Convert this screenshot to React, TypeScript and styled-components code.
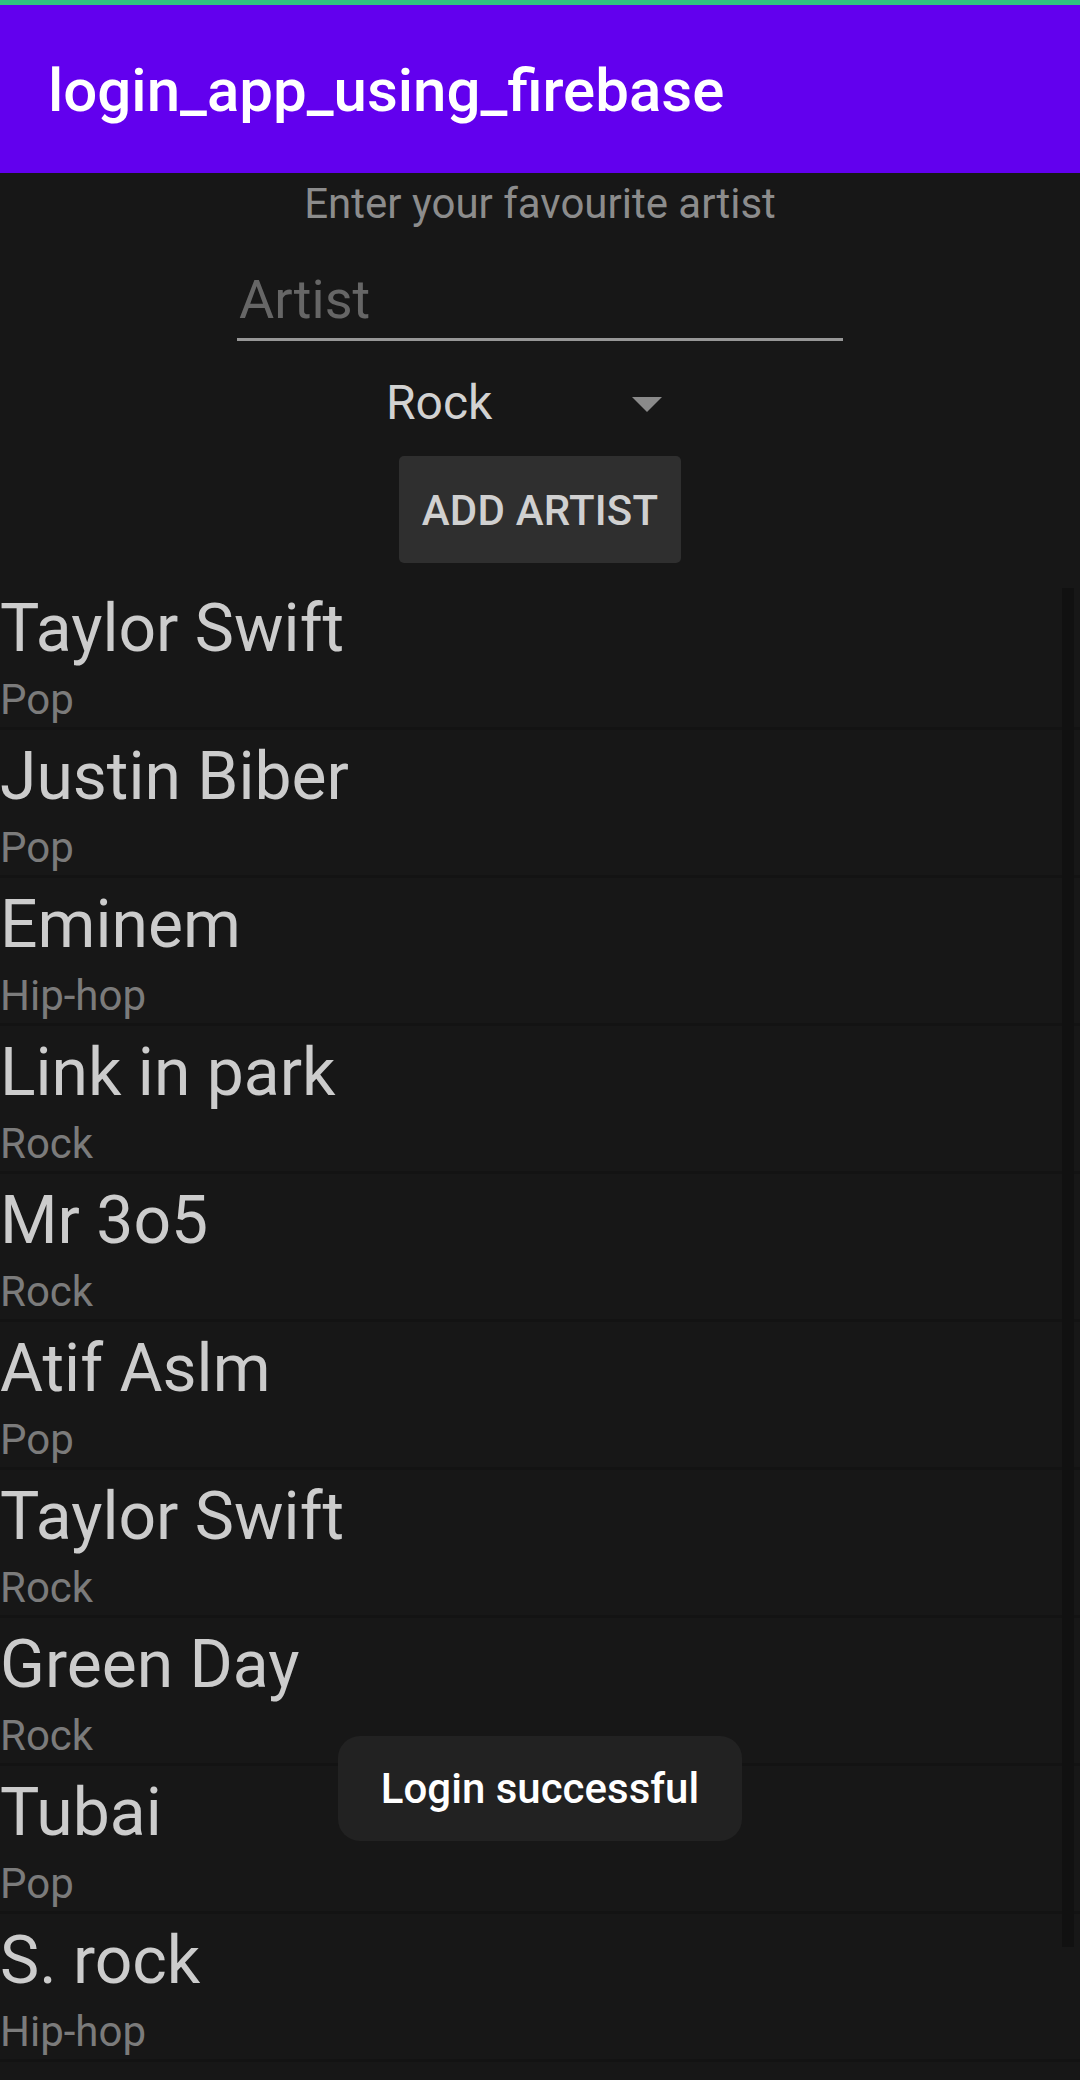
import React from "react";
import styled, { createGlobalStyle } from "styled-components";

const GlobalStyle = createGlobalStyle`
  html, body {
    margin: 0;
    padding: 0;
    background: #171717;
  }
  * { box-sizing: border-box; }
`;

const Screen = styled.div`
  position: relative;
  width: 1080px;
  height: 2080px;
  overflow: hidden;
  background: #171717;
  font-family: Roboto, "Noto Sans", sans-serif;
  display: flex;
  flex-direction: column;
`;

const StatusStrip = styled.div`
  height: 5px;
  background: #2fc37f;
  flex: none;
`;

const Toolbar = styled.header`
  height: 168px;
  flex: none;
  background: #6200ee;
  display: flex;
  align-items: center;
  padding: 4px 48px 0;
`;

const Title = styled.h1`
  margin: 0;
  font-size: 60px;
  font-weight: 500;
  color: #ffffff;
  line-height: 70px;
`;

const Form = styled.section`
  display: flex;
  flex-direction: column;
  align-items: center;
  flex: none;
`;

const Prompt = styled.p`
  margin: 8px 0 0;
  font-size: 42px;
  line-height: 46px;
  color: #8c8c8c;
`;

const ArtistInput = styled.input`
  margin-top: 41px;
  width: 606px;
  height: 73px;
  padding: 0 0 7px 2px;
  border: none;
  border-bottom: 3px solid #979797;
  background: transparent;
  font-family: Roboto, sans-serif;
  font-size: 54px;
  line-height: 63px;
  color: #d0d0d0;
  outline: none;
  &::placeholder {
    color: #666666;
  }
`;

const Spinner = styled.div`
  margin-top: 34px;
  width: 320px;
  height: 56px;
  padding: 0 38px 0 6px;
  display: flex;
  align-items: center;
  justify-content: space-between;
`;

const SpinnerValue = styled.span`
  font-size: 48px;
  line-height: 56px;
  color: #d2d2d2;
`;

const Caret = styled.span`
  width: 0;
  height: 0;
  border-left: 15px solid transparent;
  border-right: 15px solid transparent;
  border-top: 15px solid #8a8a8a;
  margin-top: 2px;
`;

const AddButton = styled.button`
  margin-top: 25px;
  width: 282px;
  height: 107px;
  border: none;
  border-radius: 5px;
  background: #2f2f2f;
  color: #d0d0d0;
  font-family: Roboto, sans-serif;
  font-size: 42px;
  font-weight: 500;
  letter-spacing: 0.2px;
  display: flex;
  align-items: center;
  justify-content: center;
  padding: 2px 0 0;
`;

const ListWrap = styled.div`
  position: relative;
  margin-top: 19px;
  flex: none;
`;

const ArtistList = styled.ul`
  list-style: none;
  margin: 0;
  padding: 0;
`;

const Row = styled.li`
  height: 148px;
  padding-top: 5px;
  border-bottom: 3px solid #131313;
  display: flex;
  flex-direction: column;
`;

const Name = styled.span`
  font-size: 66px;
  line-height: 84px;
  color: #cccccc;
  white-space: nowrap;
`;

const Genre = styled.span`
  margin-top: 4px;
  font-size: 42px;
  line-height: 49px;
  color: #7b7b7b;
`;

const ScrollThumb = styled.div`
  position: absolute;
  top: 6px;
  right: 6px;
  width: 12px;
  height: 1359px;
  background: #111111;
`;

const Toast = styled.div`
  position: absolute;
  left: 50%;
  bottom: 239px;
  transform: translateX(-50%);
  width: 404px;
  height: 105px;
  border-radius: 22px;
  background: #222222;
  color: #ffffff;
  font-size: 42px;
  font-weight: 500;
  display: flex;
  align-items: center;
  justify-content: center;
  white-space: nowrap;
`;

const artists: { name: string; genre: string }[] = [
  { name: "Taylor Swift", genre: "Pop" },
  { name: "Justin Biber", genre: "Pop" },
  { name: "Eminem", genre: "Hip-hop" },
  { name: "Link in park", genre: "Rock" },
  { name: "Mr 3o5", genre: "Rock" },
  { name: "Atif Aslm", genre: "Pop" },
  { name: "Taylor Swift", genre: "Rock" },
  { name: "Green Day", genre: "Rock" },
  { name: "Tubai", genre: "Pop" },
  { name: "S. rock", genre: "Hip-hop" },
];

export default function App() {
  return (
    <>
      <GlobalStyle />
      <Screen>
        <StatusStrip />
        <Toolbar>
          <Title>login_app_using_firebase</Title>
        </Toolbar>
        <Form>
          <Prompt>Enter your favourite artist</Prompt>
          <ArtistInput placeholder="Artist" />
          <Spinner>
            <SpinnerValue>Rock</SpinnerValue>
            <Caret />
          </Spinner>
          <AddButton>ADD ARTIST</AddButton>
        </Form>
        <ListWrap>
          <ArtistList>
            {artists.map((a, i) => (
              <Row key={i}>
                <Name>{a.name}</Name>
                <Genre>{a.genre}</Genre>
              </Row>
            ))}
          </ArtistList>
          <ScrollThumb />
        </ListWrap>
        <Toast>Login successful</Toast>
      </Screen>
    </>
  );
}
